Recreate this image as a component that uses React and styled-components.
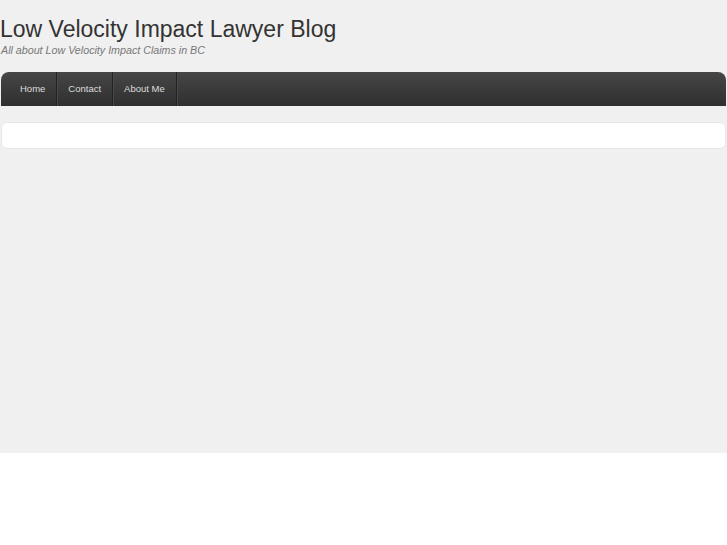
import React from 'react';
import styled, { createGlobalStyle } from 'styled-components';

const GlobalStyle = createGlobalStyle`
  html, body {
    margin: 0;
    padding: 0;
    background: #ffffff;
  }
  body {
    font-family: "Liberation Sans", Arial, sans-serif;
  }
`;

const Page = styled.div`
  background: #f0f0f0;
  min-height: 453px;
  box-sizing: border-box;
  padding: 15px 1px 0 1px;
`;

const Header = styled.header`
  padding: 0;
`;

const SiteTitle = styled.h1`
  margin: 0 0 0 -1px;
  font-size: 23px;
  line-height: 28px;
  font-weight: normal;
  color: #333333;
`;

const Tagline = styled.p`
  margin: 0;
  font-size: 10.7px;
  line-height: 14px;
  font-style: italic;
  color: #777777;
`;

const Nav = styled.nav`
  margin-top: 15px;
  height: 34px;
  display: flex;
  padding-left: 8px;
  border-radius: 8px 8px 0 0;
  background: linear-gradient(to bottom, #464646 0%, #2f2f2f 100%);
`;

const NavItem = styled.a`
  display: flex;
  align-items: center;
  padding: 0 11px 1px;
  font-size: 9.5px;
  color: #dddddd;
  text-decoration: none;
  border-right: 1px solid #222222;
  box-shadow: 1px 0 0 #4a4a4a;
`;

const Content = styled.main`
  margin-top: 16px;
  height: 27px;
  background: #ffffff;
  border-radius: 6px;
  border: 1px solid #e8e8e8;
  box-sizing: border-box;
`;

export default function App() {
  return (
    <>
      <GlobalStyle />
      <Page>
        <Header>
          <SiteTitle>Low Velocity Impact Lawyer Blog</SiteTitle>
          <Tagline>All about Low Velocity Impact Claims in BC</Tagline>
        </Header>
        <Nav>
          <NavItem href="#">Home</NavItem>
          <NavItem href="#">Contact</NavItem>
          <NavItem href="#">About Me</NavItem>
        </Nav>
        <Content />
      </Page>
    </>
  );
}
